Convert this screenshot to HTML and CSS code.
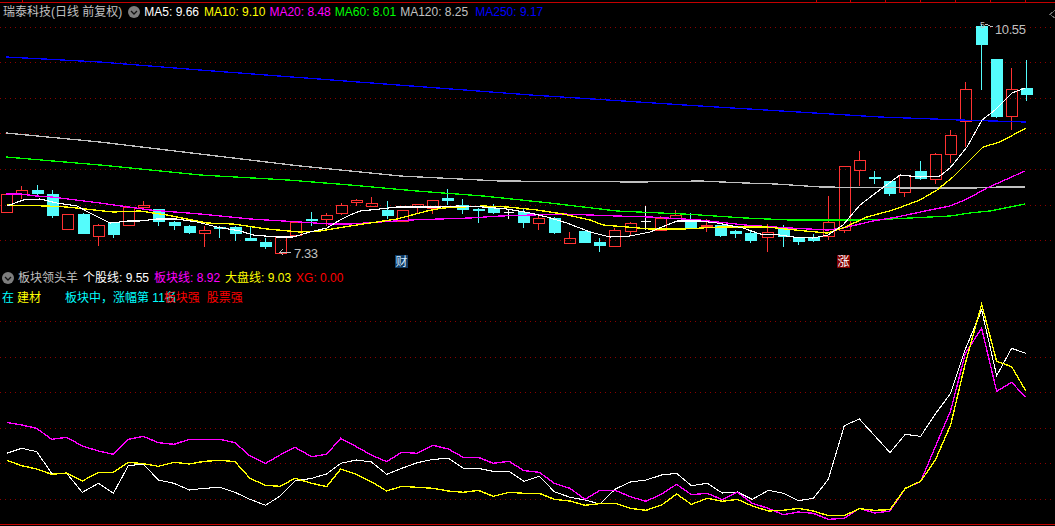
FILE: index.html
```html
<!DOCTYPE html>
<html lang="zh-CN">
<head>
<meta charset="utf-8">
<title>瑞泰科技 日线</title>
<link rel="stylesheet" href="styles.css">
</head>
<body>
<main class="terminal">
  <section class="panel panel-main">
    <svg class="chart" width="1055" height="269" viewBox="0 0 1055 269">
      <g class="frame">
        <path class="rule" d="M0 2H1055"/>
        <path class="rule" d="M22 0V2M816 0V2M850 0V2M885 0V2M920 0V2M955 0V2M990 0V2M1025 0V2"/>
        <path class="grid" d="M0 27H1055M0 62H1055M0 98H1055M0 133H1055M0 169H1055M0 205H1055M0 240H1055"/>
        <path class="divider" d="M0 269H1055"/>
      </g>
      <g class="candles" transform="translate(.5 .5)">
        <path class="wick-up" d="M21 185V190M21 194V198M67 213V214M98 223V225M98 236V245M143 200V205M143 207V209M204 225V230M204 233V246M280 235V237M295 220V222M326 212V215M326 219V225M341 202V205M341 213V214M356 198V200M356 202V205M371 196V203M402 209V210M417 206V213M432 199V200M432 208V213M538 214V218M538 223V229M569 231V238M614 227V230M630 221V223M630 231V235M660 215V218M675 209V215M706 218V225M706 226V231M767 223V232M767 237V251M828 195V222M828 236V239M844 230V232M859 150V160M859 170V185M904 174V175M904 192V196M935 152V154M935 179V183M950 129V135M950 154V162M965 81V89M965 121V146M1011 67V89M1011 116V129"/>
        <path class="body-up" d="M1 194h11v18h-11zM16 190h11v4h-11zM62 214h11v15h-11zM93 225h11v11h-11zM123 207h11v18h-11zM138 205h11v2h-11zM199 230h11v3h-11zM275 237h11v16h-11zM290 222h11v13h-11zM321 215h11v4h-11zM336 205h11v8h-11zM351 200h11v2h-11zM366 203h11v3h-11zM397 210h11v11h-11zM412 204h11v2h-11zM427 200h11v8h-11zM533 218h11v5h-11zM564 238h11v5h-11zM609 230h11v16h-11zM625 223h11v8h-11zM655 218h11v12h-11zM670 215h11v3h-11zM701 225h11v1h-11zM762 232h11v5h-11zM823 222h11v14h-11zM839 166h11v64h-11zM854 160h11v10h-11zM899 175h11v17h-11zM930 154h11v25h-11zM945 135h11v19h-11zM960 89h11v32h-11zM1006 89h11v27h-11z"/>
        <path class="wick-down" d="M37 184V195M52 189V217M83 212V233M113 221V237M158 208V225M174 220V229M189 224V233M219 225V237M235 225V240M250 226V240M265 237V248M311 211V225M387 200V218M447 188V204M462 198V213M478 207V222M493 203V213M523 207V227M554 216V233M584 231V242M599 237V251M690 212V227M720 224V236M735 229V237M750 230V242M783 224V246M798 236V244M813 233V241M874 170V183M889 180V195M920 160V179M981 23V89M996 59V117M1026 59V100"/>
        <path class="body-down" d="M32 190h11v3h-11zM47 194h11v21h-11zM78 214h11v19h-11zM108 222h11v12h-11zM153 209h11v12h-11zM169 222h11v3h-11zM184 226h11v6h-11zM214 227h11v1h-11zM230 227h11v6h-11zM245 238h11v2h-11zM260 242h11v4h-11zM306 219h11v1h-11zM382 210h11v5h-11zM442 198h11v2h-11zM457 205h11v4h-11zM473 209h11v1h-11zM488 208h11v4h-11zM518 212h11v10h-11zM549 218h11v14h-11zM579 231h11v11h-11zM594 242h11v3h-11zM685 221h11v6h-11zM715 225h11v10h-11zM730 231h11v2h-11zM745 233h11v7h-11zM778 227h11v9h-11zM793 238h11v3h-11zM808 237h11v3h-11zM869 177h11v1h-11zM884 181h11v12h-11zM915 171h11v7h-11zM976 26h11v18h-11zM991 59h11v57h-11zM1021 88h11v6h-11z"/>
        <path class="doji" d="M508 208V218M503 212H513M645 205V229M640 221H650"/>
      </g>
      <g class="lines">
        <polyline class="ma250" points="6,57 100,62 200,70 345,81 531,95 700,106 880,117 960,120 1026,122"/>
        <polyline class="ma120" points="6,133 100,142 200,154 300,166 400,176 500,181 640,182 700,181 745,183 776,184 791,185 806,186 821,187 913,188 973,188 1000,187 1025,187"/>
        <polyline class="ma60" points="6,157 100,165 200,175 288,180 350,185 417,191 483,196 550,203 617,211 683,214 700,215 745,218 790,220 855,220 890,219 930,217 950,216 970,213 990,211 1000,209 1025,204"/>
        <polyline class="ma20" points="6,194 21,194 36,196 52,197 100,203 150,210 200,214 250,219 300,222 330,224 350,224 380,222 410,220 440,219 470,218 500,216 563,214 590,215 617,216 650,217 700,220 745,225 790,228 828,230 843,228 873,221 897,217 930,210 950,206 967,199 987,188 1025,171"/>
        <polyline class="ma10" points="7,205 47,206 67,207 113,212 140,211 167,215 207,223 233,224 267,229 300,232 320,231 350,226 370,223 397,219 427,211 443,208 483,206 507,207 537,210 563,214 590,220 603,225 627,227 650,229 683,229 720,227 743,227 767,227 795,230 827,233 843,228 867,217 893,210 920,200 937,190 953,177 970,160 983,147 1000,142 1026,128"/>
        <polyline class="ma5" points="7,206 23,200 40,199 57,203 77,206 90,213 110,223 120,222 127,221 140,221 157,219 177,219 197,222 217,227 240,231 253,235 277,237 293,237 310,232 327,228 340,220 350,215 360,211 380,209 397,207 440,207 457,206 483,207 507,209 530,213 547,217 567,223 590,232 610,237 630,236 650,232 667,225 677,221 700,221 717,223 743,228 760,234 780,235 793,237 813,238 828,235 843,225 860,205 877,192 900,175 920,177 940,176 950,168 967,147 982,120 995,110 1012,93 1025,88"/>
      </g>
      <g class="extremes">
        <path class="pointer" d="M279 252H291M283 249L280 252L283 255M985 24L993 27"/>
        <text class="extreme-label" x="294" y="258">7.33</text>
        <text class="extreme-label" x="995" y="34">10.55</text>
        <text class="peak-mark" x="980" y="28">5</text>
      </g>
      <g class="flags">
        <rect class="flag-cai" x="395" y="255" width="13" height="13"/>
        <text class="flag-text flag-text-cai" x="401.5" y="266">财</text>
        <rect class="flag-zhang" x="837" y="255" width="13" height="13"/>
        <text class="flag-text" x="843.5" y="266">涨</text>
      </g>
      <path class="collapse" d="M1055 10L1050 14.500L1055 18"/>
    </svg>
    <header class="legend">
      <span class="stock">瑞泰科技(日线 前复权)</span>
      <span class="dot"><svg width="12" height="12" viewBox="0 0 12 12"><circle cx="6" cy="6" r="6"/><path d="M3 5L6 8L9 5"/></svg></span>
      <span class="item item-first c-white">MA5: 9.66</span>
      <span class="item c-yellow">MA10: 9.10</span>
      <span class="item c-magenta">MA20: 8.48</span>
      <span class="item c-green">MA60: 8.01</span>
      <span class="item item-wide c-gray">MA120: 8.25</span>
      <span class="item c-blue">MA250: 9.17</span>
    </header>
  </section>

  <section class="panel panel-sub">
    <svg class="chart" width="1055" height="257" viewBox="0 0 1055 257">
      <path class="grid" d="M0 52H1055M0 88H1055M0 123H1055M0 159H1055M0 194H1055M0 230H1055"/>
      <path class="rule" d="M0 255.500H1055"/>
      <g transform="translate(0 -269) scale(.33333)">
        <polyline class="flow-line flow-white" points="20,1360 65,1345 110,1355 155,1420 200,1420 247,1477 295,1450 340,1480 385,1397 430,1392 475,1440 522,1450 568,1470 613,1465 660,1462 705,1477 750,1498 797,1516 840,1488 885,1443 935,1435 980,1422 1022,1390 1069,1380 1114,1386 1160,1423 1205,1405 1252,1388 1300,1378 1345,1375 1390,1405 1435,1405 1480,1414 1527,1414 1572,1444 1618,1429 1663,1475 1710,1492 1755,1500 1800,1512 1846,1467 1891,1446 1938,1440 1985,1425 2030,1420 2074,1457 2122,1450 2167,1479 2212,1476 2257,1498 2305,1471 2350,1480 2395,1502 2440,1495 2485,1438 2533,1277 2578,1257 2624,1307 2670,1358 2716,1303 2762,1309 2806,1242 2852,1180 2896,1048 2945,930 2990,1127 3035,1045 3077,1060"/>
        <polyline class="flow-line flow-magenta" points="20,1267 65,1275 110,1285 155,1318 200,1312 247,1338 295,1353 340,1363 385,1318 430,1309 475,1328 522,1333 568,1318 613,1318 660,1318 705,1328 750,1368 797,1390 840,1365 885,1342 935,1370 980,1363 1022,1315 1069,1340 1114,1365 1160,1385 1205,1357 1252,1360 1300,1336 1345,1347 1390,1372 1435,1372 1480,1390 1527,1384 1572,1412 1618,1417 1663,1450 1710,1465 1755,1498 1800,1471 1846,1471 1891,1490 1938,1504 1985,1482 2030,1453 2074,1484 2122,1480 2167,1499 2212,1477 2257,1510 2305,1525 2350,1544 2395,1536 2440,1540 2485,1558 2533,1555 2578,1525 2624,1539 2670,1533 2716,1465 2762,1445 2806,1340 2852,1232 2896,1060 2945,985 2990,1174 3035,1147 3077,1192"/>
        <polyline class="flow-line flow-yellow" points="20,1381 65,1397 110,1407 155,1423 200,1419 247,1443 295,1417 340,1417 385,1387 430,1391 475,1399 522,1387 568,1392 613,1384 660,1381 705,1385 750,1435 797,1456 840,1459 885,1435 935,1450 980,1460 1022,1407 1069,1423 1114,1445 1160,1473 1205,1459 1252,1462 1300,1465 1345,1473 1390,1477 1435,1471 1480,1489 1527,1477 1572,1480 1618,1480 1663,1498 1710,1503 1755,1516 1800,1511 1846,1510 1891,1525 1938,1531 1985,1515 2030,1482 2074,1513 2122,1495 2167,1504 2212,1498 2257,1518 2305,1533 2350,1531 2395,1525 2440,1533 2485,1547 2533,1547 2578,1526 2624,1531 2670,1529 2716,1465 2762,1444 2806,1380 2852,1275 2896,1090 2945,913 2990,1084 3035,1100 3077,1172"/>
      </g>
    </svg>
    <div class="sub-legend">
      <header class="legend legend-sub">
        <span class="dot"><svg width="12" height="12" viewBox="0 0 12 12"><circle cx="6" cy="6" r="6"/><path d="M3 5L6 8L9 5"/></svg></span>
        <span class="stock">板块领头羊</span>
        <span class="item c-white">个股线: 9.55</span>
        <span class="item c-magenta">板块线: 8.92</span>
        <span class="item c-yellow">大盘线: 9.03</span>
        <span class="item c-red">XG: 0.00</span>
      </header>
      <div class="notes">
        <span class="c-cyan">在</span>
        <span class="c-yellow note-sector">建材</span>
        <span class="c-cyan note-rank">板块中，涨幅第 11名</span>
        <span class="c-red note-strong">板块强</span>
        <span class="c-red note-stock">股票强</span>
      </div>
    </div>
  </section>
</main>
</body>
</html>
```
FILE: styles.css
```css
* { box-sizing: border-box; }
html, body { margin: 0; background: #000; }
body { overflow: hidden; font: 12px/16px "Liberation Sans", "Noto Sans CJK SC", sans-serif; }

.terminal { width: 1055px; height: 526px; display: flex; flex-direction: column; }
.panel { display: grid; align-items: start; }
.panel > * { grid-area: 1 / 1; }
.panel-main { height: 269px; }
.panel-sub { height: 257px; }
.chart { display: block; shape-rendering: crispEdges; fill: none; }

.rule { stroke: #c40000; stroke-width: 1; }
.divider { stroke: #8f0000; stroke-width: 1; }
.grid { stroke: #8c0000; stroke-width: 1; stroke-dasharray: 1 4; }

.wick-up { stroke: #ff3232; }
.body-up { stroke: #ff3232; fill: none; }
.wick-down { stroke: #54fcfc; }
.body-down { stroke: #54fcfc; fill: #54fcfc; }
.doji { stroke: #fff; }

.lines polyline { fill: none; stroke-width: 1.3; }
.lines .ma5 { stroke: #fff; stroke-width: 1.1; }
.ma10 { stroke: #ff0; }
.ma20 { stroke: #f0f; }
.ma60 { stroke: #0f0; }
.ma120 { stroke: #c0c0c0; }
.ma250 { stroke: #00f; }

.flow-line { fill: none; stroke-width: 4; }
.flow-white { stroke: #fff; stroke-width: 3.2; }
.flow-magenta { stroke: #f0f; }
.flow-yellow { stroke: #ff0; }

.pointer { stroke: #c0c0c0; }
.extreme-label { fill: #c0c0c0; font-size: 13px; letter-spacing: -.4px; }
.peak-mark { fill: #c0c0c0; font-size: 9px; }
.flag-cai { fill: #0f3a62; }
.flag-zhang { fill: #800000; }
.flag-text { fill: #fff; font-size: 12px; text-anchor: middle; }
.flag-text-cai { fill: #cfe8ff; }
.collapse { stroke: #6a6a6a; }

.legend { display: flex; align-items: center; height: 16px; margin: 4px 0 0 3px; color: #c0c0c0; white-space: nowrap; }
.dot { display: flex; margin: 0 4px 0 6px; }
.dot circle { fill: #7d7d7d; }
.dot path { fill: none; stroke: #111; stroke-width: 1.3; }
.item { margin-right: 4px; }
.item-first { margin-right: 5px; }
.item-wide { margin-right: 7px; }

.sub-legend { display: flex; flex-direction: column; }
.legend-sub { margin: 1px 0 0; height: 16px; }
.legend-sub .dot { margin: 0 4px 0 2px; }
.legend-sub > .stock { margin-right: 5px; }
.legend-sub .item { margin-right: 5px; }
.notes { display: flex; height: 16px; margin: 4px 0 0 2px; white-space: nowrap; }
.note-sector { margin-left: 3px; }
.note-rank { margin-left: 24px; }
.note-strong { margin-left: -13px; }
.note-stock { margin-left: 7px; }

.c-white { color: #fff; }
.c-yellow { color: #ff0; }
.c-magenta { color: #f0f; }
.c-green { color: #0f0; }
.c-gray { color: #c0c0c0; }
.c-blue { color: #00f; }
.c-red { color: #f00; }
.c-cyan { color: #0ff; }
```
